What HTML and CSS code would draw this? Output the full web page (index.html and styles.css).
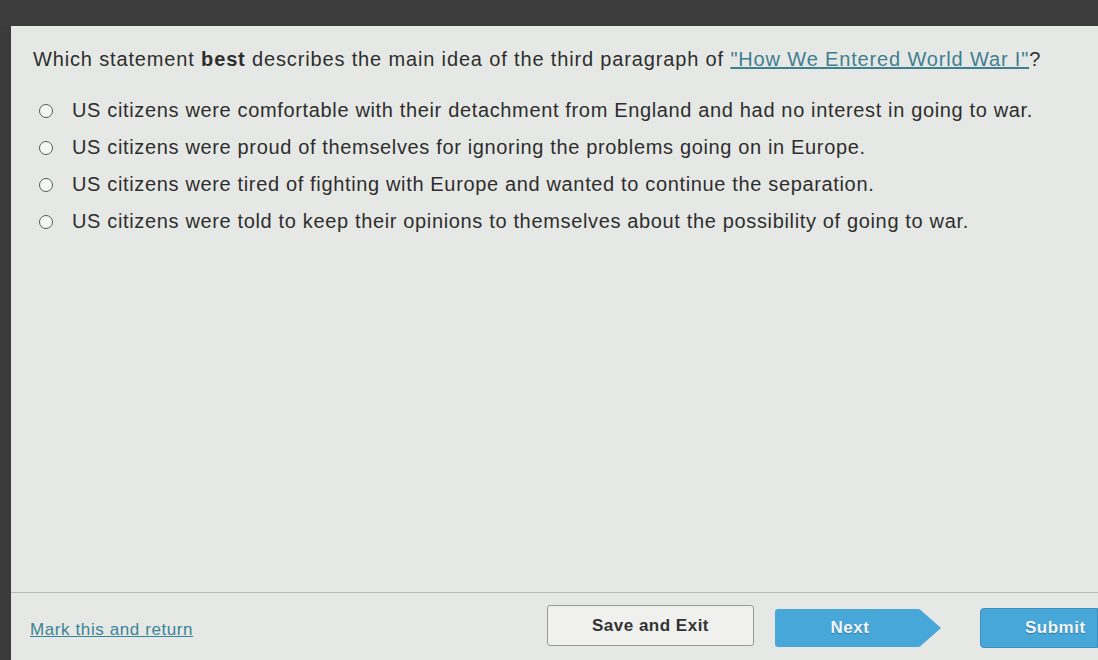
FILE: index.html
```html
<!DOCTYPE html>
<html lang="en">
<head>
<meta charset="utf-8">
<title>Question</title>
<link rel="stylesheet" href="styles.css">
</head>
<body>
<div class="topbar"></div>
<div class="frame">
  <div class="panel">
    <div class="question-area">
      <p class="prompt">Which statement <b>best</b> describes the main idea of the third paragraph of <a class="link" href="#">"How We Entered World War I"</a>?</p>
      <ul class="options">
        <li class="option"><span class="radio"></span><span>US citizens were comfortable with their detachment from England and had no interest in going to war.</span></li>
        <li class="option"><span class="radio"></span><span>US citizens were proud of themselves for ignoring the problems going on in Europe.</span></li>
        <li class="option"><span class="radio"></span><span>US citizens were tired of fighting with Europe and wanted to continue the separation.</span></li>
        <li class="option"><span class="radio"></span><span>US citizens were told to keep their opinions to themselves about the possibility of going to war.</span></li>
      </ul>
    </div>
    <div class="footer">
      <a class="mark" href="#">Mark this and return</a>
      <div class="actions">
        <button class="btn btn-save">Save and Exit</button>
        <button class="btn btn-next">Next</button>
        <button class="btn btn-submit">Submit</button>
      </div>
    </div>
  </div>
</div>
</body>
</html>
```
FILE: styles.css
```css
html, body {
  margin: 0;
  padding: 0;
  height: 100%;
  background: #3b3b3b;
  overflow: hidden;
}

.topbar {
  height: 26px;
  background: #3d3d3d;
}

.frame {
  height: calc(100% - 26px);
  padding-left: 11px;
  display: flex;
}

.panel {
  flex: 1;
  background: #e6e8e5;
  display: flex;
  flex-direction: column;
  font-family: "Liberation Sans", Arial, sans-serif;
  color: #2e2e2e;
}

.question-area {
  flex: 1;
  padding: 20px 0 0 22px;
  border-bottom: 1px solid #b9bbb8;
}

.prompt {
  margin: 0;
  font-size: 20px;
  letter-spacing: 0.85px;
  line-height: 26px;
}

.link {
  color: #3f7f8f;
  text-decoration: underline;
}

.options {
  list-style: none;
  margin: 20px 0 0 0;
  padding: 0 0 0 6px;
}

.option {
  display: flex;
  align-items: center;
  gap: 19px;
  height: 37px;
  font-size: 20px;
  letter-spacing: 0.65px;
}

.radio {
  width: 12px;
  height: 12px;
  border: 1.5px solid #5a5a5a;
  border-radius: 50%;
  background: #f6f6f4;
  flex-shrink: 0;
}

.footer {
  height: 67px;
  display: flex;
  align-items: center;
  padding-left: 19px;
}

.mark {
  font-size: 17px;
  letter-spacing: 0.6px;
  color: #3a8595;
  text-decoration: underline;
  margin-top: 6px;
}

.actions {
  margin-left: auto;
  display: flex;
  align-items: center;
}

.btn {
  font-family: "Liberation Sans", Arial, sans-serif;
  font-weight: bold;
  font-size: 17px;
  letter-spacing: 0.5px;
  border: none;
  cursor: pointer;
}

.btn-save {
  width: 207px;
  height: 41px;
  background: #f0f1ef;
  color: #333;
  border: 1px solid #999;
  border-radius: 3px;
  margin-right: 21px;
  margin-top: -2px;
}

.btn-next {
  width: 166px;
  height: 38px;
  background: #47a7d8;
  color: #f2f6f8;
  clip-path: polygon(0 0, 87% 0, 100% 50%, 87% 100%, 0 100%);
  border-radius: 3px 0 0 3px;
  padding-right: 22px;
  margin-right: 39px;
  margin-top: 3px;
  text-shadow: 0 1px 1px rgba(0,0,0,0.3);
}

.btn-submit {
  width: 118px;
  height: 40px;
  background: #47a7d8;
  color: #f2f6f8;
  border: 1px solid #3a8fbd;
  border-radius: 4px 0 0 4px;
  padding-left: 44px;
  text-align: left;
  margin-top: 3px;
  text-shadow: 0 1px 1px rgba(0,0,0,0.3);
}
```
